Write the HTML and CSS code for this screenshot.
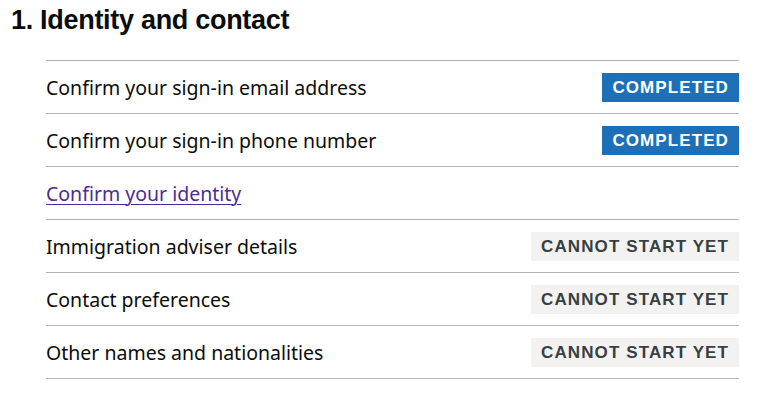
FILE: index.html
```html
<!DOCTYPE html>
<html>
<head>
	<meta charset="utf-8">
	<title>Task list</title>
	<link rel="stylesheet" href="styles.css">
</head>
<body>
	<h2 class="section-title">1. Identity and contact</h2>

	<ul class="task-list">
		<li class="task">
			<span class="task-name">Confirm your sign-in email address</span>
			<strong class="tag tag-done">Completed</strong>
		</li>
		<li class="task">
			<span class="task-name">Confirm your sign-in phone number</span>
			<strong class="tag tag-done">Completed</strong>
		</li>
		<li class="task">
			<a class="task-name task-link" href="#">Confirm your identity</a>
		</li>
		<li class="task">
			<span class="task-name">Immigration adviser details</span>
			<strong class="tag tag-grey">Cannot start yet</strong>
		</li>
		<li class="task">
			<span class="task-name">Contact preferences</span>
			<strong class="tag tag-grey">Cannot start yet</strong>
		</li>
		<li class="task">
			<span class="task-name">Other names and nationalities</span>
			<strong class="tag tag-grey">Cannot start yet</strong>
		</li>
	</ul>
</body>
</html>
```

FILE: styles.css
```css
body{
	margin: 0;
	padding: 0 18px 0 11px;
	background-color: #fff;
	color: #0b0c0c;
	font-family: "Noto Sans", "Open Sans", Arial, sans-serif;
}
.section-title{
	margin: 0;
	padding-top: 4px;
	font-family: "Liberation Sans", Arial, sans-serif;
	font-size: 27px;
	line-height: 32px;
	font-weight: bold;
	letter-spacing: -0.3px;
}
.task-list{
	list-style: none;
	margin: 24px 0 0 35px;
	padding: 0;
	border-top: 1px solid #b1b4b6;
}
.task{
	display: flex;
	align-items: center;
	justify-content: space-between;
	height: 52px;
	border-bottom: 1px solid #b1b4b6;
}
.task-name{
	font-size: 19.5px;
	line-height: 25px;
}
.task-link{
	color: #4c2c92;
	text-decoration: underline;
	text-decoration-thickness: 1px;
	text-underline-offset: 3px;
}
.tag{
	display: inline-block;
	padding: 5px 10px 4px 10px;
	font-family: "Liberation Sans", Arial, sans-serif;
	font-size: 17px;
	line-height: 20px;
	font-weight: bold;
	letter-spacing: 1.1px;
	text-transform: uppercase;
}
.tag-done{
	background-color: #1d70b8;
	color: #fff;
}
.tag-grey{
	background-color: #f3f2f1;
	color: #383f43;
}
```
